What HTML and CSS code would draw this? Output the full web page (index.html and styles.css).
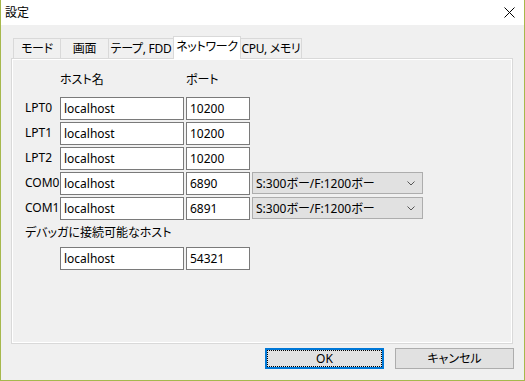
FILE: index.html
```html
<!DOCTYPE html>
<html lang="ja">
<head>
<meta charset="utf-8">
<title>設定</title>
<link rel="stylesheet" href="styles.css">
</head>
<body>
<div class="window">
  <div class="titlebar">
    <span class="title">設定</span>
    <span class="close">
      <svg width="11" height="11" viewBox="0 0 11 11"><path d="M0.5 0.5 L10.5 10.5 M10.5 0.5 L0.5 10.5" stroke="#000" stroke-width="1" fill="none"/></svg>
    </span>
  </div>
  <div class="content">
    <div class="tabs">
      <div class="tab t1">モード</div>
      <div class="tab t2">画面</div>
      <div class="tab t3">テープ, FDD</div>
      <div class="tab t4 selected">ネットワーク</div>
      <div class="tab t5">CPU, メモリ</div>
    </div>
    <div class="panel">
      <div class="grid">
        <div class="head"></div>
        <div class="head">ホスト名</div>
        <div class="head">ポート</div>
        <div class="head"></div>

        <div class="label">LPT0</div>
        <div class="field">localhost</div>
        <div class="field">10200</div>
        <div></div>

        <div class="label">LPT1</div>
        <div class="field">localhost</div>
        <div class="field">10200</div>
        <div></div>

        <div class="label">LPT2</div>
        <div class="field">localhost</div>
        <div class="field">10200</div>
        <div></div>

        <div class="label">COM0</div>
        <div class="field">localhost</div>
        <div class="field">6890</div>
        <div class="combo"><span>S:300ボー/F:1200ボー</span><svg width="8" height="5" viewBox="0 0 8 5"><path d="M0.5 0.5 L4 4 L7.5 0.5" stroke="#555" stroke-width="1" fill="none"/></svg></div>

        <div class="label">COM1</div>
        <div class="field">localhost</div>
        <div class="field">6891</div>
        <div class="combo"><span>S:300ボー/F:1200ボー</span><svg width="8" height="5" viewBox="0 0 8 5"><path d="M0.5 0.5 L4 4 L7.5 0.5" stroke="#555" stroke-width="1" fill="none"/></svg></div>

        <div class="label wide">デバッガに接続可能なホスト</div>

        <div></div>
        <div class="field">localhost</div>
        <div class="field">54321</div>
        <div></div>
      </div>
    </div>
    <div class="buttons">
      <button class="btn default">OK</button>
      <button class="btn">キャンセル</button>
    </div>
  </div>
</div>
</body>
</html>
```
FILE: styles.css
```css
* { box-sizing: border-box; }
html, body { margin: 0; padding: 0; }
body {
  font-family: "Noto Sans", "Noto Sans CJK JP", sans-serif;
  font-size: 12px;
  font-feature-settings: "palt";
  color: #000;
  background: #fff;
}
.window {
  width: 525px;
  height: 381px;
  background: #f0f0f0;
  border-left: 1px solid #a6b84c;
  border-right: 1px solid #a6b84c;
  border-bottom: 1px solid #a6b84c;
  display: flex;
  flex-direction: column;
}
.titlebar {
  height: 25px;
  background: #fff;
  display: flex;
  align-items: center;
  justify-content: space-between;
  padding: 0 9px 0 4px;
}
.title { font-size: 12px; line-height: 16px; }
.close { display: flex; align-items: center; }
.content { display: flex; flex-direction: column; }
.tabs {
  display: flex;
  align-items: flex-end;
  margin-top: 11px;
  margin-left: 12px;
  height: 22px;
}
.tab {
  height: 20px;
  border: 1px solid #d9d9d9;
  border-bottom: none;
  background: #f0f0f0;
  margin-left: -1px;
  display: flex;
  align-items: center;
  justify-content: center;
  line-height: 16px;
  white-space: nowrap;
  letter-spacing: -0.3px;
}
.t1 { margin-left: 0; width: 48px; }
.t2 { width: 49px; }
.t3 { width: 66px; }
.t4 { width: 68px; }
.t5 { width: 62px; }
.tab.selected {
  height: 23px;
  margin-bottom: -1px;
  background: #fff;
  position: relative;
  z-index: 1;
  padding-bottom: 2px;
}
.panel {
  margin-left: 10px;
  width: 502px;
  height: 286px;
  border: 1px solid #d9d9d9;
  box-shadow: inset 0 0 0 1px #fff;
  padding: 13px 0 0 13px;
}
.grid {
  display: grid;
  grid-template-columns: 33px 124px 64px 171px;
  grid-auto-rows: 23px;
  column-gap: 2px;
  row-gap: 2px;
}
.head {
  line-height: 16px;
  align-self: start;
  white-space: nowrap;
}
.label {
  align-self: center;
  line-height: 16px;
  white-space: nowrap;
  margin-top: -2px;
}
.label.wide { grid-column: 1 / -1; margin-top: -1px; }
.field {
  border: 1px solid #7a7a7a;
  background: #fff;
  padding: 0 3px;
  display: flex;
  align-items: center;
  line-height: 16px;
  white-space: nowrap;
}
.combo {
  height: 22px;
  border: 1px solid #adadad;
  background: #e1e1e1;
  display: flex;
  align-items: center;
  justify-content: space-between;
  padding: 0 7px 0 3px;
  white-space: nowrap;
}
.buttons {
  display: flex;
  justify-content: flex-end;
  gap: 11px;
  margin-top: 4px;
  padding-right: 10px;
}
.btn {
  width: 119px;
  height: 21px;
  background: #e1e1e1;
  border: 1px solid #adadad;
  font: inherit;
  font-feature-settings: "palt";
  color: #000;
  padding: 0;
  margin: 0;
  line-height: 16px;
}
.btn.default {
  border: 2px solid #0078d7;
  outline: 1px dotted #000;
  outline-offset: -3px;
}
```
